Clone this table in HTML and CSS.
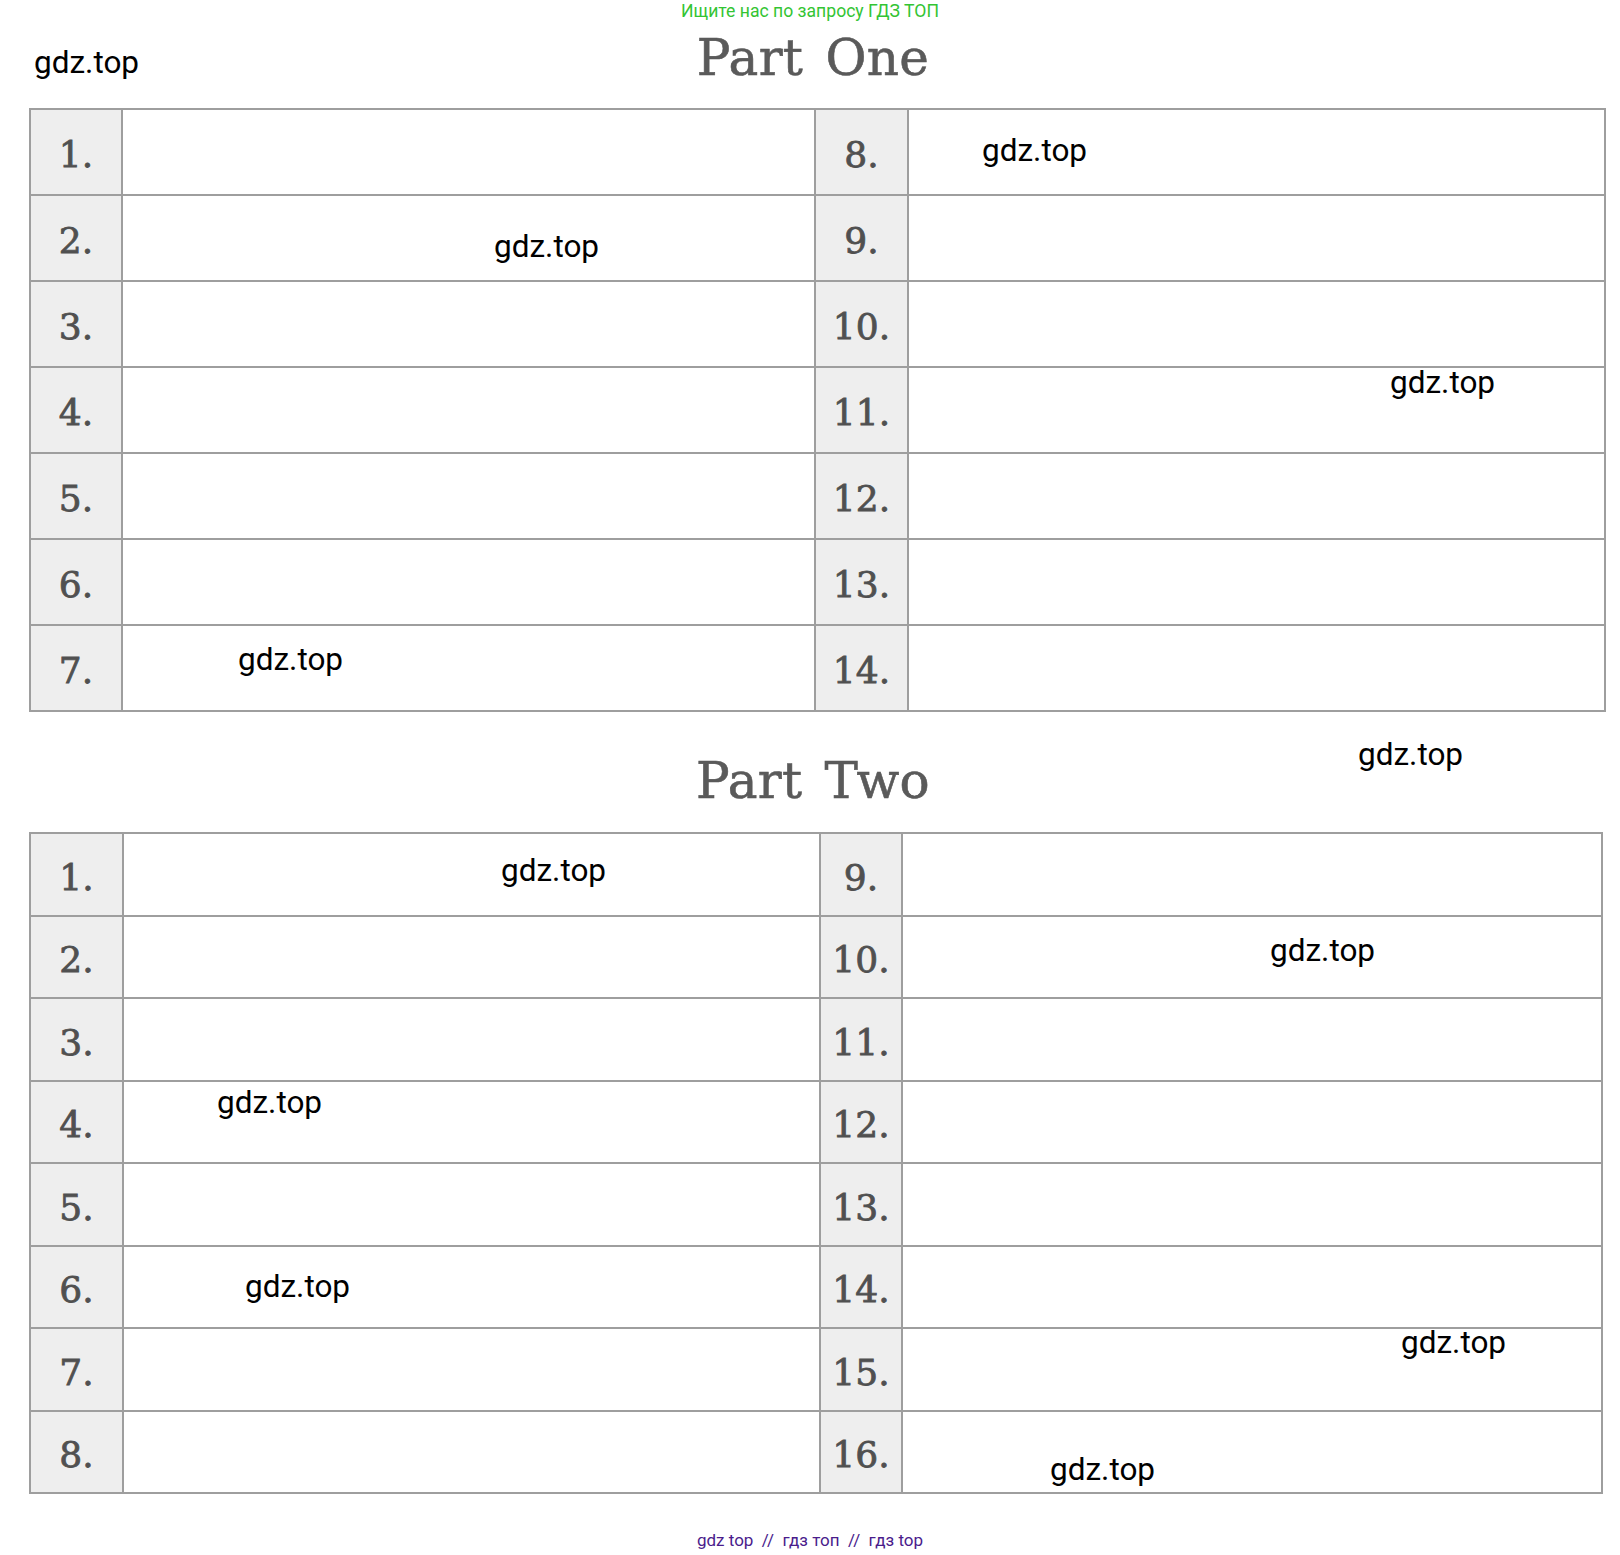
FILE: index.html
```html
<!DOCTYPE html>
<html lang="en">
<head>
<meta charset="utf-8">
<title>Part One / Part Two</title>
<link rel="stylesheet" href="styles.css">
</head>
<body>
<div class="page">
  <div class="promo">Ищите нас по запросу ГДЗ ТОП</div>

  <h2 class="part-title part-one">Part One</h2>
  <div class="sheet sheet-one">
    <div class="num">1.</div><div class="ans"></div><div class="num">8.</div><div class="ans"></div>
    <div class="num">2.</div><div class="ans"></div><div class="num">9.</div><div class="ans"></div>
    <div class="num">3.</div><div class="ans"></div><div class="num">10.</div><div class="ans"></div>
    <div class="num">4.</div><div class="ans"></div><div class="num">11.</div><div class="ans"></div>
    <div class="num">5.</div><div class="ans"></div><div class="num">12.</div><div class="ans"></div>
    <div class="num">6.</div><div class="ans"></div><div class="num">13.</div><div class="ans"></div>
    <div class="num">7.</div><div class="ans"></div><div class="num">14.</div><div class="ans"></div>
  </div>

  <h2 class="part-title part-two">Part Two</h2>
  <div class="sheet sheet-two">
    <div class="num">1.</div><div class="ans"></div><div class="num">9.</div><div class="ans"></div>
    <div class="num">2.</div><div class="ans"></div><div class="num">10.</div><div class="ans"></div>
    <div class="num">3.</div><div class="ans"></div><div class="num">11.</div><div class="ans"></div>
    <div class="num">4.</div><div class="ans"></div><div class="num">12.</div><div class="ans"></div>
    <div class="num">5.</div><div class="ans"></div><div class="num">13.</div><div class="ans"></div>
    <div class="num">6.</div><div class="ans"></div><div class="num">14.</div><div class="ans"></div>
    <div class="num">7.</div><div class="ans"></div><div class="num">15.</div><div class="ans"></div>
    <div class="num">8.</div><div class="ans"></div><div class="num">16.</div><div class="ans"></div>
  </div>

  <div class="footer">gdz top&nbsp; //&nbsp; гдз топ&nbsp; //&nbsp; гдз top</div>

  <span class="wm wm-1">gdz.top</span>
  <span class="wm wm-2">gdz.top</span>
  <span class="wm wm-3">gdz.top</span>
  <span class="wm wm-4">gdz.top</span>
  <span class="wm wm-5">gdz.top</span>
  <span class="wm wm-6">gdz.top</span>
  <span class="wm wm-7">gdz.top</span>
  <span class="wm wm-8">gdz.top</span>
  <span class="wm wm-9">gdz.top</span>
  <span class="wm wm-10">gdz.top</span>
  <span class="wm wm-11">gdz.top</span>
  <span class="wm wm-12">gdz.top</span>
</div>
</body>
</html>
```

FILE: styles.css
```css
html, body {
  margin: 0;
  padding: 0;
  background: #ffffff;
}

body {
  font-family: Roboto, "Liberation Sans", sans-serif;
}

.page {
  position: relative;
  width: 1620px;
  height: 1555px;
  overflow: hidden;
}

.promo {
  height: 22px;
  line-height: 22px;
  text-align: center;
  font-size: 17.6px;
  color: #33c433;
}

.part-title {
  margin: 0;
  padding-left: 6px;
  font-family: "DejaVu Serif", "Liberation Serif", serif;
  font-weight: normal;
  font-size: 50px;
  line-height: 60px;
  letter-spacing: 0.3px;
  word-spacing: 6px;
  color: #5a5a5a;
  -webkit-text-stroke: 0.6px #5a5a5a;
  text-align: center;
}

.part-one {
  margin-top: 6px;
}

.part-two {
  margin-top: 39px;
}

.sheet {
  display: grid;
  margin-left: 29px;
  border-top: 2px solid #9e9e9e;
  border-left: 2px solid #9e9e9e;
  box-sizing: border-box;
}

.sheet-one {
  margin-top: 20px;
  width: 1577px;
  grid-template-columns: 92px 693px 93px 697px;
  grid-template-rows: repeat(7, 86px);
}

.sheet-two {
  margin-top: 21px;
  width: 1574px;
  grid-template-columns: 93px 697px 82px 700px;
  grid-template-rows: 83px 82px 83px 82px 83px 82px 83px 82px;
}

.num,
.ans {
  border-right: 2px solid #9e9e9e;
  border-bottom: 2px solid #9e9e9e;
  box-sizing: border-box;
}

.num {
  display: flex;
  align-items: center;
  justify-content: center;
  padding-top: 5px;
  background: #eeeeee;
  font-family: "DejaVu Serif", "Liberation Serif", serif;
  font-size: 36px;
  color: #505050;
  -webkit-text-stroke: 0.8px #505050;
}

.ans {
  background: #ffffff;
}

.footer {
  margin-top: 34px;
  line-height: 24px;
  text-align: center;
  font-size: 17px;
  color: #4a1c8c;
}

.wm {
  position: absolute;
  font-family: Roboto, "Liberation Sans", sans-serif;
  font-size: 31.5px;
  line-height: 36px;
  color: #000000;
  white-space: nowrap;
}

.wm-1 { left: 34px; top: 45px; }
.wm-2 { left: 982px; top: 133px; }
.wm-3 { left: 494px; top: 229px; }
.wm-4 { left: 1390px; top: 365px; }
.wm-5 { left: 238px; top: 642px; }
.wm-6 { left: 1358px; top: 737px; }
.wm-7 { left: 501px; top: 853px; }
.wm-8 { left: 1270px; top: 933px; }
.wm-9 { left: 217px; top: 1085px; }
.wm-10 { left: 245px; top: 1269px; }
.wm-11 { left: 1401px; top: 1325px; }
.wm-12 { left: 1050px; top: 1452px; }
```
